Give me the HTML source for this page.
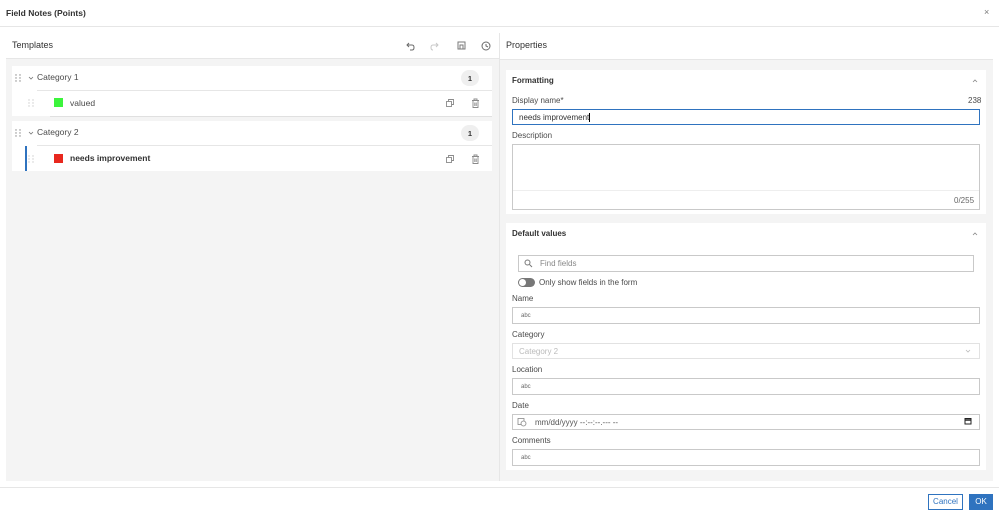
<!DOCTYPE html>
<html><head><meta charset="utf-8"><style>
*{box-sizing:border-box;margin:0;padding:0}
body{width:999px;height:517px;background:#fff;font-family:"Liberation Sans",sans-serif;font-size:8px;color:#323232;position:relative;overflow:hidden}
.a{position:absolute}
.t{font-size:8.5px;color:#4a4a4a}
.inp{position:absolute;left:512px;width:468px;height:17px;border:1px solid #c9c9c9;background:#fff;font-size:6px;color:#666;padding:5px 8px}
.lbl{position:absolute;left:512px;font-size:8px;color:#4a4a4a}
.badge{position:absolute;left:461px;width:18px;height:16px;border-radius:9px;background:#efefef;font-size:7.5px;font-weight:bold;display:flex;align-items:center;justify-content:center}
</style></head><body>
<div class="a" style="left:6px;top:8px;font-size:8.5px;font-weight:bold;color:#323232">Field Notes (Points)</div>
<div class="a" style="left:984px;top:7px;font-size:9px;color:#777">×</div>
<div class="a" style="left:0;top:26px;width:999px;height:1px;background:#e6e6e6"></div>

<!-- left panel -->
<div class="a" style="left:6px;top:33px;width:493px;height:448px;background:#f4f4f4"></div>
<div class="a" style="left:6px;top:33px;width:493px;height:26px;background:#fff;border-bottom:1px solid #e6e6e6"></div>
<div class="a" style="left:12px;top:40px;font-size:9px;color:#323232">Templates</div>
<svg class="a" style="left:405px;top:40px" width="90" height="12" fill="none" stroke-width="1">
<path d="M4 3 L2 5 L4 7 M2 5 H7 Q9 5 9 7.5 Q9 10 7 10 H5" stroke="#6a6a6a"/>
<path d="M31 3 L33 5 L31 7 M33 5 H28 Q26 5 26 7.5 Q26 10 28 10" stroke="#c8c8c8"/>
<rect x="53" y="2" width="7" height="7" stroke="#7a7a7a"/><rect x="55" y="5" width="3" height="4" stroke="#7a7a7a"/>
<circle cx="81" cy="6" r="4" stroke="#6a6a6a"/><path d="M81 4 V6 L83 7" stroke="#6a6a6a"/>
</svg>
<div class="a" style="left:499px;top:33px;width:1px;height:448px;background:#e6e6e6"></div>

<!-- category 1 -->
<div class="a" style="left:12px;top:66px;width:480px;height:50px;background:#fff"></div>
<div class="a" style="left:37px;top:90px;width:455px;height:1px;background:#e6e6e6"></div>
<div class="a" style="left:50px;top:116px;width:442px;height:1px;background:#e0e0e0"></div>
<svg class="a" style="left:28px;top:75px" width="6" height="6" fill="none" stroke="#777" stroke-width=".8"><path d="M1 2 L3 4 L5 2"/></svg>
<div class="a t" style="left:37px;top:72px">Category 1</div>
<div class="badge" style="top:70px">1</div>
<div class="a" style="left:54px;top:98px;width:9px;height:9px;background:#3cf43c"></div>
<div class="a t" style="left:70px;top:98px">valued</div>

<!-- category 2 -->
<div class="a" style="left:12px;top:121px;width:480px;height:50px;background:#fff"></div>
<div class="a" style="left:37px;top:145px;width:455px;height:1px;background:#e6e6e6"></div>
<div class="a" style="left:25px;top:146px;width:2px;height:25px;background:#2f73bf"></div>
<svg class="a" style="left:28px;top:130px" width="6" height="6" fill="none" stroke="#777" stroke-width=".8"><path d="M1 2 L3 4 L5 2"/></svg>
<div class="a t" style="left:37px;top:127px">Category 2</div>
<div class="badge" style="top:125px">1</div>
<div class="a" style="left:54px;top:154px;width:9px;height:9px;background:#e8281e"></div>
<div class="a" style="left:70px;top:153px;font-size:8.5px;color:#323232;font-weight:bold">needs improvement</div>

<svg class="a" style="left:0;top:0" width="60" height="180">
<g fill="#888"><circle cx="16" cy="75" r=".7"/><circle cx="16" cy="78" r=".7"/><circle cx="16" cy="81" r=".7"/><circle cx="20" cy="75" r=".7"/><circle cx="20" cy="78" r=".7"/><circle cx="20" cy="81" r=".7"/>
<circle cx="16" cy="130" r=".7"/><circle cx="16" cy="133" r=".7"/><circle cx="16" cy="136" r=".7"/><circle cx="20" cy="130" r=".7"/><circle cx="20" cy="133" r=".7"/><circle cx="20" cy="136" r=".7"/></g>
<g fill="#ccc"><circle cx="29" cy="100" r=".7"/><circle cx="29" cy="103" r=".7"/><circle cx="29" cy="106" r=".7"/><circle cx="33" cy="100" r=".7"/><circle cx="33" cy="103" r=".7"/><circle cx="33" cy="106" r=".7"/>
<circle cx="29" cy="156" r=".7"/><circle cx="29" cy="159" r=".7"/><circle cx="29" cy="162" r=".7"/><circle cx="33" cy="156" r=".7"/><circle cx="33" cy="159" r=".7"/><circle cx="33" cy="162" r=".7"/></g>
</svg>

<svg class="a" style="left:445px;top:98px" width="40" height="70" fill="none" stroke="#8a8a8a" stroke-width="0.9">
<rect x="1.5" y="3.5" width="5" height="5"/><path d="M3.5 3.5 V1.5 H8.5 V6.5 H6.5"/>
<path d="M27 2.5 H34 M29 2.5 V1 H32 V2.5 M28 3 V9.5 H33 V3 M29.8 4.5 V8 M31.2 4.5 V8"/>
<g transform="translate(0,56)"><rect x="1.5" y="3.5" width="5" height="5"/><path d="M3.5 3.5 V1.5 H8.5 V6.5 H6.5"/>
<path d="M27 2.5 H34 M29 2.5 V1 H32 V2.5 M28 3 V9.5 H33 V3 M29.8 4.5 V8 M31.2 4.5 V8"/></g>
</svg>

<!-- right panel -->
<div class="a" style="left:500px;top:59px;width:493px;height:422px;background:#f4f4f4"></div>
<div class="a" style="left:500px;top:59px;width:493px;height:1px;background:#e6e6e6"></div>
<div class="a" style="left:506px;top:40px;font-size:9px;color:#323232">Properties</div>

<div class="a" style="left:506px;top:70px;width:480px;height:144px;background:#fff"></div>
<div class="a" style="left:512px;top:76px;font-size:8px;font-weight:bold;color:#323232">Formatting</div>
<svg class="a" style="left:972px;top:78px" width="6" height="5" fill="none" stroke="#888" stroke-width=".8"><path d="M1 4 L3 2 L5 4"/></svg>
<div class="lbl" style="top:96px">Display name*</div>
<div class="a" style="left:968px;top:96px;font-size:8px;color:#4a4a4a">238</div>
<div class="inp" style="top:109px;height:16px;border:1px solid #2f73bf;font-size:8px;color:#323232;padding:3px 6px">needs improvement<span style="border-left:1px solid #000"></span></div>
<div class="lbl" style="top:131px">Description</div>
<div class="inp" style="top:144px;height:66px;padding:0"></div>
<div class="a" style="left:513px;top:190px;width:466px;height:1px;background:#eee"></div>
<div class="a" style="left:954px;top:196px;font-size:8px;color:#666">0/255</div>

<div class="a" style="left:506px;top:223px;width:480px;height:247px;background:#fff"></div>
<div class="a" style="left:512px;top:229px;font-size:8px;font-weight:bold;color:#323232">Default values</div>
<svg class="a" style="left:972px;top:231px" width="6" height="5" fill="none" stroke="#888" stroke-width=".8"><path d="M1 4 L3 2 L5 4"/></svg>
<div class="inp" style="left:518px;width:456px;top:255px;height:17px;font-size:8px;color:#888;padding:3px 0 0 21px">Find fields</div>
<svg class="a" style="left:524px;top:259px" width="9" height="9" fill="none" stroke="#777"><circle cx="3.5" cy="3.5" r="2.5"/><path d="M5.5 5.5 L8 8"/></svg>
<div class="a" style="left:518px;top:278px;width:17px;height:9px;border-radius:5px;background:#777"></div>
<div class="a" style="left:519px;top:279px;width:7px;height:7px;border-radius:4px;background:#fff"></div>
<div class="a" style="left:539px;top:278px;font-size:8px;color:#4a4a4a">Only show fields in the form</div>
<div class="lbl" style="top:294px">Name</div>
<div class="inp" style="top:307px">abc</div>
<div class="lbl" style="top:330px">Category</div>
<div class="inp" style="top:343px;height:16px;border-color:#e2e2e2;font-size:8px;color:#bbb;padding:3px 6px">Category 2</div>
<svg class="a" style="left:965px;top:349px" width="6" height="5" fill="none" stroke="#bbb" stroke-width=".8"><path d="M1 1 L3 3 L5 1"/></svg>
<div class="lbl" style="top:365px">Location</div>
<div class="inp" style="top:378px">abc</div>
<div class="lbl" style="top:401px">Date</div>
<div class="inp" style="top:414px;height:16px;font-size:8px;color:#555;padding:3px 0 0 22px">mm/dd/yyyy --:--:--.--- --</div>
<svg class="a" style="left:517px;top:417px" width="10" height="10" fill="none" stroke="#888" stroke-width="0.8"><rect x="1" y="1.5" width="6" height="6"/><circle cx="6.5" cy="6.5" r="2.5" fill="#fff"/></svg>
<svg class="a" style="left:964px;top:417px" width="8" height="8" fill="none" stroke="#222"><rect x="1" y="1.5" width="6" height="5.5"/><path d="M1 3 H7" stroke-width="1.5"/></svg>
<div class="lbl" style="top:436px">Comments</div>
<div class="inp" style="top:449px">abc</div>

<!-- footer -->
<div class="a" style="left:0;top:487px;width:999px;height:1px;background:#e6e6e6"></div>
<div class="a" style="left:928px;top:494px;width:35px;height:16px;border:1px solid #2f73bf;font-size:8px;color:#2f73bf;text-align:center;line-height:14px">Cancel</div>
<div class="a" style="left:969px;top:494px;width:24px;height:16px;background:#2f73bf;font-size:8px;color:#fff;text-align:center;line-height:16px">OK</div>
</body></html>
